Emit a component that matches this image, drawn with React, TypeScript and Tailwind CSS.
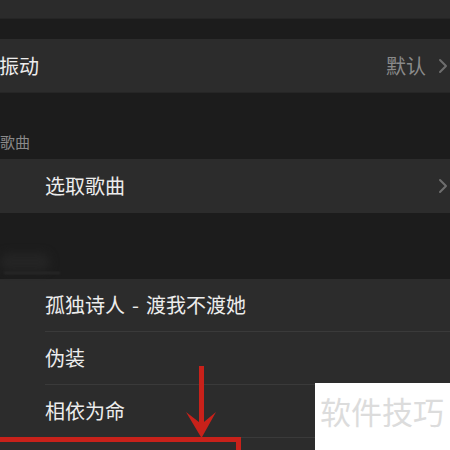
import React from "react";

const Chevron = () => (
  <svg width="10" height="16" viewBox="0 0 10 16" className="shrink-0">
    <path d="M2 2 L8 8 L2 14" fill="none" stroke="#6e6e6e" strokeWidth="2" strokeLinecap="round" strokeLinejoin="round" />
  </svg>
);

export default function App() {
  const font = { fontFamily: '"Noto Sans CJK SC", "Noto Sans", sans-serif' };
  const items: React.ReactNode[] = [
    <>
      孤独诗人<span className="mx-[7px]">-</span>渡我不渡她
    </>,
    "伪装",
    "相依为命",
    "",
  ];
  return (
    <div className="relative w-[450px] h-[450px] overflow-hidden bg-[#1c1c1c]" style={font}>
      <div className="flex flex-col">
        <div className="h-[19px] bg-[#2b2b2b] border-b border-[#252525]" />
        <div className="h-[20px]" />
        <div className="h-[54px] bg-[#2c2c2c] flex items-center justify-between pr-[2px] border-b border-[#262626]">
          <span className="text-[20px] text-[#ededed] ml-[-1px] leading-none">振动</span>
          <div className="flex items-center gap-[12px]">
            <span className="text-[20px] text-[#8a8a8a] leading-none">默认</span>
            <Chevron />
          </div>
        </div>
        <div className="h-[66px] flex items-end pb-[10px]">
          <span className="text-[15px] text-[#8a8a8a] leading-none">歌曲</span>
        </div>
        <div className="h-[54px] bg-[#2c2c2c] flex items-center justify-between pl-[45px] pr-[2px]">
          <span className="text-[20px] text-[#ededed] leading-none">选取歌曲</span>
          <Chevron />
        </div>
        <div className="h-[66px] relative">
          <div className="absolute left-0 top-[40px] w-[50px] h-[18px] rounded-full bg-[#242424] blur-[4px]" />
          <div className="absolute left-[4px] top-[59px] w-[56px] h-[2px] bg-[#2a2a2a] blur-[1px]" />
        </div>
        <div className="bg-[#2c2c2c] flex flex-col">
          {items.map((t, i) => (
            <div key={i} className="pl-[45px]">
              <div className="h-[53px] flex items-center border-b border-[#3a3a3a]">
                <span className="text-[20px] text-[#ededed] leading-none">{t}</span>
              </div>
            </div>
          ))}
        </div>
      </div>

      {/* red box */}
      <div className="absolute left-[-10px] top-[437px] w-[251px] h-[40px] border-[5px] border-[#c8211a]" />
      {/* red arrow */}
      <svg className="absolute left-[183px] top-[366px]" width="36" height="74" viewBox="0 0 36 74">
        <rect x="16" y="0" width="5" height="60" fill="#c8211a" />
        <path d="M3 46 L18.5 72 L33 46 L18.5 58 Z" fill="#c8211a" />
      </svg>

      {/* watermark */}
      <div className="absolute left-[315px] top-[383px] w-[140px] h-[70px] bg-white flex items-start pt-[12px] pl-[5px]">
        <span className="text-[31px] text-[#dcdcdc] leading-none tracking-[0px]">软件技巧</span>
      </div>
    </div>
  );
}
